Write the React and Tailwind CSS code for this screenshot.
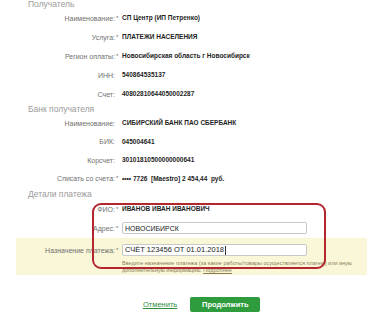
import React from "react";

const Label = ({ children, req }) => (
  <div className="w-[119px] shrink-0 text-right text-[7px] text-[#707070] leading-none pr-0">
    {children}:<span className={"inline-block w-[4px] text-[6px] align-top text-left pl-[1px] " + (req ? "" : "invisible")}>*</span>
  </div>
);

const Row = ({ label, req, value, h }) => (
  <div className={"flex items-center " + h}>
    <Label req={req}>{label}</Label>
    <div className="pl-[3px] text-[6.5px] font-bold text-[#1e1e1e] leading-none whitespace-nowrap">{value}</div>
  </div>
);

const Heading = ({ children, h }) => (
  <div className={"pl-[28px] text-[8.5px] text-[#9a9a9a] leading-none flex items-center " + h}>{children}</div>
);

export default function App() {
  return (
    <div
      className="relative w-[383px] h-[320px] bg-white overflow-hidden"
      style={{ fontFamily: '"Liberation Sans", Arial, sans-serif' }}
    >
      <Heading h="h-[9px]">Получатель</Heading>
      <Row h="h-[19px]" label="Наименование" req value="СП Центр (ИП Петренко)" />
      <Row h="h-[19px]" label="Услуга" req value="ПЛАТЕЖИ НАСЕЛЕНИЯ" />
      <Row h="h-[19px]" label="Регион оплаты" req value="Новосибирская область г Новосибирск" />
      <Row h="h-[19px]" label="ИНН" value="540864535137" />
      <Row h="h-[19px]" label="Счет" value="40802810644050002287" />
      <Heading h="h-[10px]">Банк получателя</Heading>
      <Row h="h-[18.5px]" label="Наименование" value="СИБИРСКИЙ БАНК ПАО СБЕРБАНК" />
      <Row h="h-[18.5px]" label="БИК" value="045004641" />
      <Row h="h-[18.5px]" label="Корсчет" value="30101810500000000641" />
      <Row
        h="h-[18.5px]"
        label="Списать со счета"
        req
        value={<span>•••• 7726&nbsp; [Maestro] 2 454,44 &nbsp;руб.</span>}
      />
      <Heading h="h-[12px]">Детали платежа</Heading>
      <Row h="h-[18px]" label="ФИО" req value="ИВАНОВ ИВАН ИВАНОВИЧ" />
      <div className="flex items-center h-[20px]">
        <Label req>Адрес</Label>
        <div className="ml-[3px] w-[185px] h-[12px] border border-[#c8c8c8] rounded-[2px] bg-white flex items-center pl-[2px] text-[7px] text-[#222] leading-none">
          НОВОСИБИРСК
        </div>
      </div>
      <div className="mx-[16px] h-[37px] bg-[#faf7d8] flex flex-col">
        <div className="flex items-center h-[22px] pt-[2px]">
          <div className="w-[103px] shrink-0 text-right text-[7px] text-[#707070] leading-none">
            Назначение платежа:<span className="inline-block w-[4px] text-[6px] align-top text-left pl-[1px]">*</span>
          </div>
          <div className="ml-[3px] w-[185px] h-[12px] border border-[#c8c8c8] rounded-[2px] bg-white flex items-center pl-[2px] text-[7.5px] text-[#222] leading-none whitespace-nowrap">
            СЧЁТ 123456 ОТ 01.01.2018<span className="inline-block w-[1px] h-[9px] bg-[#333] ml-[1px]"></span>
          </div>
        </div>
        <div className="pl-[106px] pr-[20px] text-[5.5px] leading-[7px] text-[#8a7c55]">
          <div className="whitespace-nowrap">Введите назначение платежа (за какие работы/товары осуществляется платеж) или иную</div>
          <div className="whitespace-nowrap">дополнительную информацию. <span className="underline">Подробнее</span></div>
        </div>
      </div>
      <div className="flex items-center pl-[143px] gap-[13px] mt-[22px]">
        <span className="text-[7.5px] text-[#2f8f3f] underline leading-none">Отменить</span>
        <div className="w-[70px] h-[15px] rounded-[2px] bg-[#2e9b3c] flex items-center justify-center text-white font-bold text-[7.5px] leading-none">
          Продолжить
        </div>
      </div>
      <div className="absolute left-[92px] top-[203px] w-[234px] h-[66px] border-2 border-[#b3262e] rounded-[9px] pointer-events-none"></div>
    </div>
  );
}
